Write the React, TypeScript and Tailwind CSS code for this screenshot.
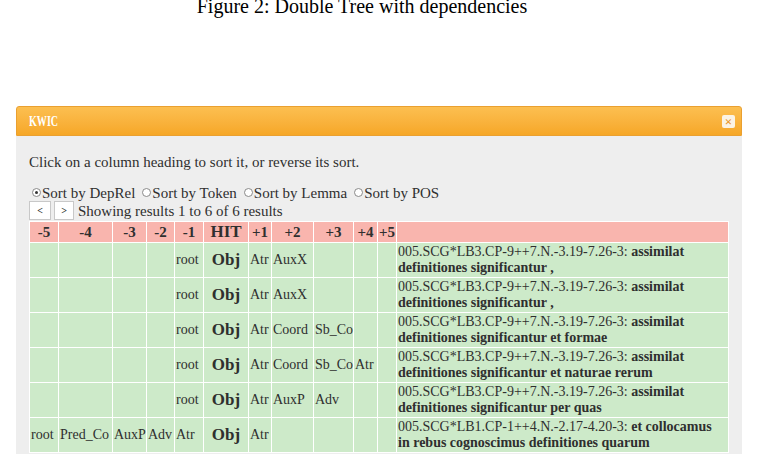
import React from "react";

const serif = { fontFamily: '"Liberation Serif", "Times New Roman", serif' };

const cols = [29, 54, 34, 28, 29, 45, 23, 42, 40, 24, 19, 332];
const heads = ["-5", "-4", "-3", "-2", "-1", "HIT", "+1", "+2", "+3", "+4", "+5", ""];

type Row = { cells: string[]; id: string; text: string; text2: string };

const rows: Row[] = [
  { cells: ["", "", "", "", "root", "Obj", "Atr", "AuxX", "", "", ""], id: "005.SCG*LB3.CP-9++7.N.-3.19-7.26-3: ", text: "assimilat", text2: "definitiones significantur ," },
  { cells: ["", "", "", "", "root", "Obj", "Atr", "AuxX", "", "", ""], id: "005.SCG*LB3.CP-9++7.N.-3.19-7.26-3: ", text: "assimilat", text2: "definitiones significantur ," },
  { cells: ["", "", "", "", "root", "Obj", "Atr", "Coord", "Sb_Co", "", ""], id: "005.SCG*LB3.CP-9++7.N.-3.19-7.26-3: ", text: "assimilat", text2: "definitiones significantur et formae" },
  { cells: ["", "", "", "", "root", "Obj", "Atr", "Coord", "Sb_Co", "Atr", ""], id: "005.SCG*LB3.CP-9++7.N.-3.19-7.26-3: ", text: "assimilat", text2: "definitiones significantur et naturae rerum" },
  { cells: ["", "", "", "", "root", "Obj", "Atr", "AuxP", "Adv", "", ""], id: "005.SCG*LB3.CP-9++7.N.-3.19-7.26-3: ", text: "assimilat", text2: "definitiones significantur per quas" },
  { cells: ["root", "Pred_Co", "AuxP", "Adv", "Atr", "Obj", "Atr", "", "", "", ""], id: "005.SCG*LB1.CP-1++4.N.-2.17-4.20-3: ", text: "et collocamus", text2: "in rebus cognoscimus definitiones quarum" },
];

function Radio({ checked, label }: { checked?: boolean; label: string }) {
  return (
    <span className="flex items-center">
      <span className="w-[9px] h-[9px] rounded-full border border-[#8a8a8a] bg-white flex items-center justify-center">
        {checked && <span className="w-[3px] h-[3px] rounded-full bg-[#333]" />}
      </span>
      <span className="ml-[1px]">{label}</span>
    </span>
  );
}

export default function App() {
  return (
    <div className="w-[764px] h-[454px] bg-white overflow-hidden text-[#2f2f2f]" style={serif}>
      <div className="text-center text-[20px] leading-[20px] text-black -mt-[4px] pr-[40px]">
        Figure 2: Double Tree with dependencies
      </div>
      <div className="ml-[16px] w-[726px] mt-[90px]">
        <div className="h-[30px] rounded-t-[3px] border border-[#eaa030] bg-gradient-to-b from-[#fcbf50] to-[#f6a726] flex items-center justify-between pl-[12px] pr-[6px]">
          <span className="text-white font-bold text-[14px] inline-block scale-x-[0.72] origin-left">KWIC</span>
          <span className="w-[13px] h-[13px] rounded-[2px] bg-[#fbf3e4] flex items-center justify-center text-[#e8962a] text-[13px] font-bold leading-none">×</span>
        </div>
        <div className="bg-[#eeeeee] h-[400px] pl-[13px] pt-[17px] text-[15px] leading-[18px]">
          <div>Click on a column heading to sort it, or reverse its sort.</div>
          <div className="mt-[13px] flex items-center gap-[7px] pl-[3px] h-[17px]">
            <Radio checked label="Sort by DepRel" />
            <Radio label="Sort by Token" />
            <Radio label="Sort by Lemma" />
            <Radio label="Sort by POS" />
          </div>
          <div className="flex items-center h-[19px] mb-[1px]">
            <span className="w-[22px] h-[19px] bg-white border border-[#c8c8c8] flex items-center justify-center text-[10px] font-bold">&lt;</span>
            <span className="ml-[3px] w-[20px] h-[19px] bg-white border border-[#c8c8c8] flex items-center justify-center text-[10px] font-bold">&gt;</span>
            <span className="ml-[4px]">Showing results 1 to 6 of 6 results</span>
          </div>
          <table className="table-fixed border-collapse w-[699px]">
            <colgroup>
              {cols.map((w, i) => (
                <col key={i} style={{ width: w }} />
              ))}
            </colgroup>
            <thead>
              <tr className="h-[21px] bg-[#f9b5ae]">
                {heads.map((h, i) => (
                  <th
                    key={i}
                    className={`border border-white p-0 font-bold text-center ${h === "HIT" ? "text-[17px]" : "text-[15px]"}`}
                  >
                    {h}
                  </th>
                ))}
              </tr>
            </thead>
            <tbody>
              {rows.map((r, ri) => (
                <tr key={ri} className="h-[35px] bg-[#cdeac9]">
                  {r.cells.map((c, ci) => (
                    <td
                      key={ci}
                      className={`border border-white p-0 align-middle whitespace-nowrap overflow-hidden ${ci === 5 ? "text-center font-bold text-[17px]" : "pl-[1px] text-[14px]"}`}
                    >
                      {c}
                    </td>
                  ))}
                  <td className="border border-white pl-[1px] py-0 align-middle leading-[16px] text-[14px] whitespace-nowrap">
                    {r.id}
                    <b>{r.text}</b>
                    <br />
                    <b>{r.text2}</b>
                  </td>
                </tr>
              ))}
            </tbody>
          </table>
        </div>
      </div>
    </div>
  );
}
